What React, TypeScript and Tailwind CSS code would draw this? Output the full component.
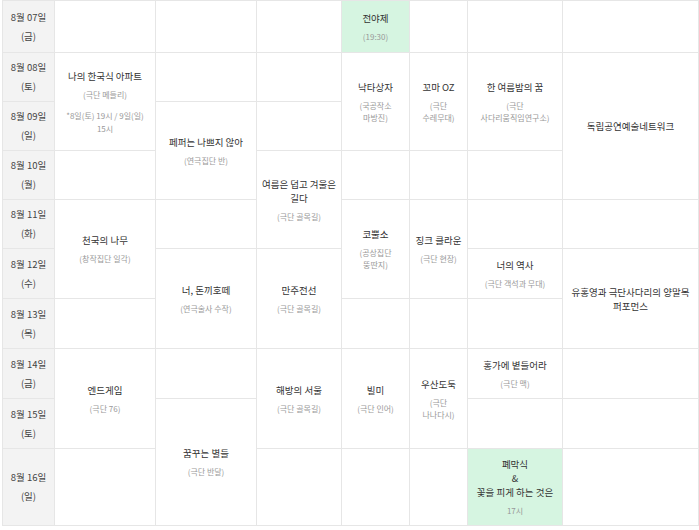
import React from "react";

type Show = {
  title: string[];
  sub?: string[];
  note?: string[];
  green?: boolean;
};

type Cell = { span?: number; show?: Show } | null;

const dates = [
  ["8월 07일", "(금)"],
  ["8월 08일", "(토)"],
  ["8월 09일", "(일)"],
  ["8월 10일", "(월)"],
  ["8월 11일", "(화)"],
  ["8월 12일", "(수)"],
  ["8월 13일", "(목)"],
  ["8월 14일", "(금)"],
  ["8월 15일", "(토)"],
  ["8월 16일", "(일)"],
];

const rowHeights = ["h-[52px]", "h-[49px]", "h-[49px]", "h-[49px]", "h-[49px]", "h-[50px]", "h-[50px]", "h-[50px]", "h-[50px]", "h-[77px]"];

// null = covered by a rowspan from above
const rows: Cell[][] = [
  [{}, {}, {}, { show: { title: ["전야제"], sub: ["(19:30)"], green: true } }, {}, {}, {}],
  [
    { span: 2, show: { title: ["나의 한국식 아파트"], sub: ["(극단 메들리)"], note: ["*8일(토) 19시 / 9일(일)", "15시"] } },
    {},
    {},
    { span: 2, show: { title: ["낙타상자"], sub: ["(국공작소", "마방진)"] } },
    { span: 2, show: { title: ["꼬마 OZ"], sub: ["(극단", "수레무대)"] } },
    { span: 2, show: { title: ["한 여름밤의 꿈"], sub: ["(극단", "사다리움직임연구소)"] } },
    { span: 3, show: { title: ["독립공연예술네트워크"] } },
  ],
  [null, { span: 2, show: { title: ["페퍼는 나쁘지 않아"], sub: ["(연극집단 반)"] } }, {}, null, null, null, null],
  [{}, null, { span: 2, show: { title: ["여름은 덥고 겨울은", "길다"], sub: ["(극단 골목길)"] } }, {}, {}, {}, null],
  [
    { span: 2, show: { title: ["천국의 나무"], sub: ["(창작집단 일각)"] } },
    {},
    null,
    { span: 2, show: { title: ["코뿔소"], sub: ["(공상집단", "뚱딴지)"] } },
    { span: 2, show: { title: ["징크 클라운"], sub: ["(극단 현장)"] } },
    {},
    {},
  ],
  [
    null,
    { span: 2, show: { title: ["너, 돈끼호떼"], sub: ["(연극술사 수작)"] } },
    { span: 2, show: { title: ["만주전선"], sub: ["(극단 골목길)"] } },
    null,
    null,
    { show: { title: ["너의 역사"], sub: ["(극단 객석과 무대)"] } },
    { span: 2, show: { title: ["유홍영과 극단사다리의 양말목", "퍼포먼스"] } },
  ],
  [{}, null, null, {}, {}, {}, null],
  [
    { span: 2, show: { title: ["엔드게임"], sub: ["(극단 76)"] } },
    {},
    { span: 2, show: { title: ["해방의 서울"], sub: ["(극단 골목길)"] } },
    { span: 2, show: { title: ["빌미"], sub: ["(극단 인어)"] } },
    { span: 2, show: { title: ["우산도둑"], sub: ["(극단", "나나다시)"] } },
    { show: { title: ["홍가에 볕들어라"], sub: ["(극단 맥)"] } },
    {},
  ],
  [null, { span: 2, show: { title: ["꿈꾸는 별들"], sub: ["(극단 반달)"] } }, null, null, null, {}, {}],
  [{}, null, {}, {}, {}, { show: { title: ["폐막식", "&", "꽃을 피게 하는 것은"], sub: ["17시"], green: true } }, {}],
];

const widths = ["w-[101px]", "w-[101px]", "w-[85px]", "w-[68px]", "w-[58px]", "w-[95px]", "w-[136px]"];

const ShowCell = ({ show }: { show: Show }) => (
  <div className="flex flex-col items-center">
    {show.title.map((t) => (
      <p key={t} className="text-[9.5px] leading-[14px] text-[#333]">
        {t}
      </p>
    ))}
    {show.sub ? (
      <div className="mt-[6px] flex flex-col items-center">
        {show.sub.map((s) => (
          <p key={s} className="text-[8px] leading-[12px] text-[#999]">
            {s}
          </p>
        ))}
      </div>
    ) : null}
    {show.note ? (
      <div className="mt-[8px] flex flex-col items-center">
        {show.note.map((s) => (
          <p key={s} className="text-[8px] leading-[13px] text-[#999]">
            {s}
          </p>
        ))}
      </div>
    ) : null}
  </div>
);

export default function App() {
  return (
    <div className="w-[699px] h-[530px] bg-white pl-[2px] font-['Noto_Sans_CJK_KR',sans-serif]">
      <table className="table-fixed border-collapse w-[696px]">
        <colgroup>
          <col className="w-[52px]" />
          {widths.map((w, i) => (
            <col key={i} className={w} />
          ))}
        </colgroup>
        <tbody>
          {rows.map((row, r) => (
            <tr key={r} className={rowHeights[r]}>
              <td className="border border-[#e6e6e6] bg-[#f3f3f3] text-center align-middle p-0">
                <p className="text-[9.5px] leading-[19px] text-[#444]">{dates[r][0]}</p>
                <p className="text-[9.5px] leading-[19px] text-[#444]">{dates[r][1]}</p>
              </td>
              {row.map((cell, c) =>
                cell === null ? null : (
                  <td
                    key={c}
                    rowSpan={cell.span ?? 1}
                    className={`border border-[#e6e6e6] text-center align-middle px-1 py-0 ${
                      cell.show?.green ? "bg-[#d6f5e1]" : "bg-white"
                    }`}
                  >
                    {cell.show ? <ShowCell show={cell.show} /> : null}
                  </td>
                )
              )}
            </tr>
          ))}
        </tbody>
      </table>
    </div>
  );
}
